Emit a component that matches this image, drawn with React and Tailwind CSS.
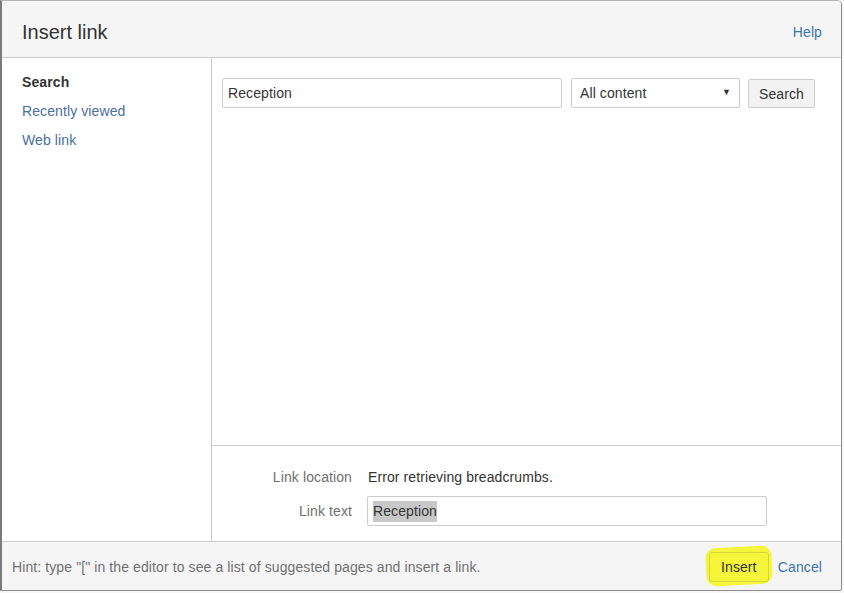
export default function App() {
  const font = { fontFamily: '"Liberation Sans", Arial, sans-serif' };
  return (
    <div className="w-[844px] h-[593px] bg-[#f7f7f7] text-[14px] tracking-[0.1px] text-[#333]" style={font}>
      <div className="w-[842px] h-[591px] bg-white border border-[#8c8c8c] border-t-[#b5b5b5] border-l-2 border-l-[#7a7a7a] rounded-tr-[5px] rounded-br-[3px] flex flex-col overflow-hidden">
        {/* Header */}
        <div className="h-[57px] shrink-0 bg-[#f5f5f5] border-b border-[#cccccc] flex items-center justify-between pl-[20px] pr-[19px]">
          <h1 className="text-[20px] tracking-normal text-[#333] pt-[6px]">Insert link</h1>
          <a className="text-[#3b73af] pt-[6px]">Help</a>
        </div>

        {/* Body */}
        <div className="flex flex-1 min-h-0">
          <nav className="w-[210px] shrink-0 border-r border-[#cccccc] pl-[20px] pt-[15px] flex flex-col gap-[10px] leading-[19px]">
            <span className="font-bold text-[#333]">Search</span>
            <a className="text-[#4a6fa0]">Recently viewed</a>
            <a className="text-[#4a6fa0]">Web link</a>
          </nav>

          <div className="flex-1 flex flex-col">
            <div className="flex-1 pt-[20px] pl-[10px] flex items-start gap-[9px]">
              <div className="w-[340px] h-[30px] border border-[#cccccc] rounded-[2px] flex items-center px-[5px] text-[#333]">Reception</div>
              <div className="w-[169px] h-[30px] border border-[#cccccc] rounded-[2px] flex items-center justify-between pl-[8px] pr-[8px] text-[#333]">
                <span>All content</span>
                <span className="text-[9px] text-[#333]">▼</span>
              </div>
              <button className="w-[67px] h-[29px] mt-[1px] ml-[-1px] pt-[2px] bg-[#f2f2f2] border border-[#cccccc] rounded-[2px] text-[#333]">Search</button>
            </div>

            <div className="h-[96px] shrink-0 border-t border-[#cccccc] pt-[22px]">
              <div className="flex items-center h-[18px]">
                <span className="w-[140px] text-right text-[#707070]">Link location</span>
                <span className="ml-[16px] text-[#333]">Error retrieving breadcrumbs.</span>
              </div>
              <div className="flex items-center mt-[10px]">
                <span className="w-[140px] text-right text-[#707070]">Link text</span>
                <div className="ml-[15px] w-[400px] h-[30px] border border-[#cccccc] rounded-[2px] flex items-center px-[5px]">
                  <span className="bg-[#c8c8c8] text-[#333]">Reception</span>
                </div>
              </div>
            </div>
          </div>
        </div>

        {/* Footer */}
        <div className="h-[49px] shrink-0 bg-[#f5f5f5] border-t border-[#cccccc] flex items-center justify-between pl-[10px] pr-[19px]">
          <span className="text-[#707070] pt-[2px]">Hint: type "[" in the editor to see a list of suggested pages and insert a link.</span>
          <div className="flex items-center gap-[9px] pt-[2px]">
            <div className="relative">
              <div className="absolute -left-[3px] -top-[5px] w-[66px] h-[38px] bg-[#f5f53a] rounded-[10px] rotate-[-3deg]"></div>
              <button className="relative w-[60px] h-[30px] border border-[#d6d63a] rounded-[3px] text-[#333] bg-transparent">Insert</button>
            </div>
            <a className="text-[#3b73af]">Cancel</a>
          </div>
        </div>
      </div>
    </div>
  );
}
